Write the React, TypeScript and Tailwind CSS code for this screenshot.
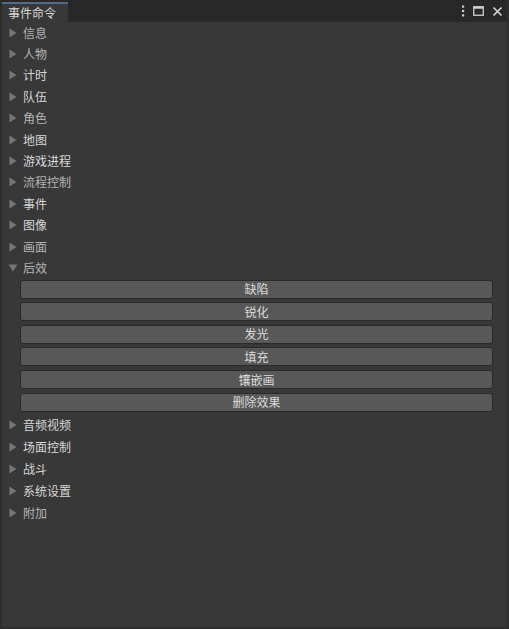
import React from "react";

const before = [
  { t: "信息", b: false },
  { t: "人物", b: false },
  { t: "计时", b: true },
  { t: "队伍", b: true },
  { t: "角色", b: false },
  { t: "地图", b: true },
  { t: "游戏进程", b: true },
  { t: "流程控制", b: false },
  { t: "事件", b: true },
  { t: "图像", b: true },
  { t: "画面", b: false },
];
const buttons = ["缺陷", "锐化", "发光", "填充", "镶嵌画", "删除效果"];
const after = [
  { t: "音频视频", b: true },
  { t: "场面控制", b: true },
  { t: "战斗", b: true },
  { t: "系统设置", b: true },
  { t: "附加", b: false },
];

function Tri({ open }: { open?: boolean }) {
  return open ? (
    <svg width="10" height="10" viewBox="0 0 10 10" className="shrink-0">
      <polygon points="0.5,1.5 9.5,1.5 5,8.5" fill="#767676" />
    </svg>
  ) : (
    <svg width="10" height="10" viewBox="0 0 10 10" className="shrink-0">
      <polygon points="1.5,0.5 8.5,5 1.5,9.5" fill="#767676" />
    </svg>
  );
}

function Row({ t, b, open, h }: { t: string; b: boolean; open?: boolean; h: string }) {
  return (
    <div className={`flex items-center pl-[6px] ${h}`}>
      <Tri open={open} />
      <span
        className={`ml-[5px] text-[12px] leading-none ${b ? "text-[#d6d6d6]" : "text-[#b4b4b4]"}`}
      >
        {t}
      </span>
    </div>
  );
}

export default function App() {
  return (
    <div
      className="w-[509px] h-[629px] bg-[#383838] flex flex-col overflow-hidden border-l-2 border-[#2c2f28] border-r-2 border-r-[#2e2e2e] border-b-2 border-b-[#2e2e2e]"
      style={{ fontFamily: '"Noto Sans CJK SC", "Noto Sans", sans-serif' }}
    >
      <div className="h-[22px] bg-[#282828] flex items-stretch shrink-0 -ml-[2px]">
        <div className="w-[68px] bg-[#383838] border-t-2 border-[#4d6b8c] flex items-center pl-[8px] mt-[2px]">
          <span className="text-[12px] text-[#d8d8d8] leading-none">事件命令</span>
        </div>
        <div className="flex-1" />
        <div className="flex items-center gap-[8px] pr-[4px]">
          <svg width="4" height="12" viewBox="0 0 4 12">
            <rect x="1" y="0.5" width="2.2" height="2.2" fill="#d0d0d0" />
            <rect x="1" y="4.9" width="2.2" height="2.2" fill="#d0d0d0" />
            <rect x="1" y="9.3" width="2.2" height="2.2" fill="#d0d0d0" />
          </svg>
          <svg width="11" height="10" viewBox="0 0 11 10">
            <rect x="0.75" y="0.75" width="9.5" height="8.5" fill="none" stroke="#d0d0d0" strokeWidth="1.3" />
            <rect x="0.75" y="0.75" width="9.5" height="2" fill="#d0d0d0" />
          </svg>
          <svg width="11" height="11" viewBox="0 0 11 11">
            <path d="M1.5 1.5 L9.5 9.5 M9.5 1.5 L1.5 9.5" stroke="#d8d8d8" strokeWidth="1.6" />
          </svg>
        </div>
      </div>
      <div className="flex-1 flex">
        <div className="flex-1 flex flex-col">
          {before.map((r) => (
            <Row key={r.t} t={r.t} b={r.b} h="h-[21.4px]" />
          ))}
          <Row t="后效" b={false} open h="h-[21.4px]" />
          <div className="flex flex-col gap-[3.6px] pl-[18px] pr-[14px] pt-[1px] pb-[2px]">
            {buttons.map((x) => (
              <div
                key={x}
                className="h-[19px] rounded-[3px] bg-[#585858] border border-[#2a2a2a] flex items-center justify-center"
              >
                <span className="text-[12px] leading-none text-[#dcdcdc]">{x}</span>
              </div>
            ))}
          </div>
          {after.map((r) => (
            <Row key={r.t} t={r.t} b={r.b} h="h-[22px]" />
          ))}
        </div>
      </div>
    </div>
  );
}
